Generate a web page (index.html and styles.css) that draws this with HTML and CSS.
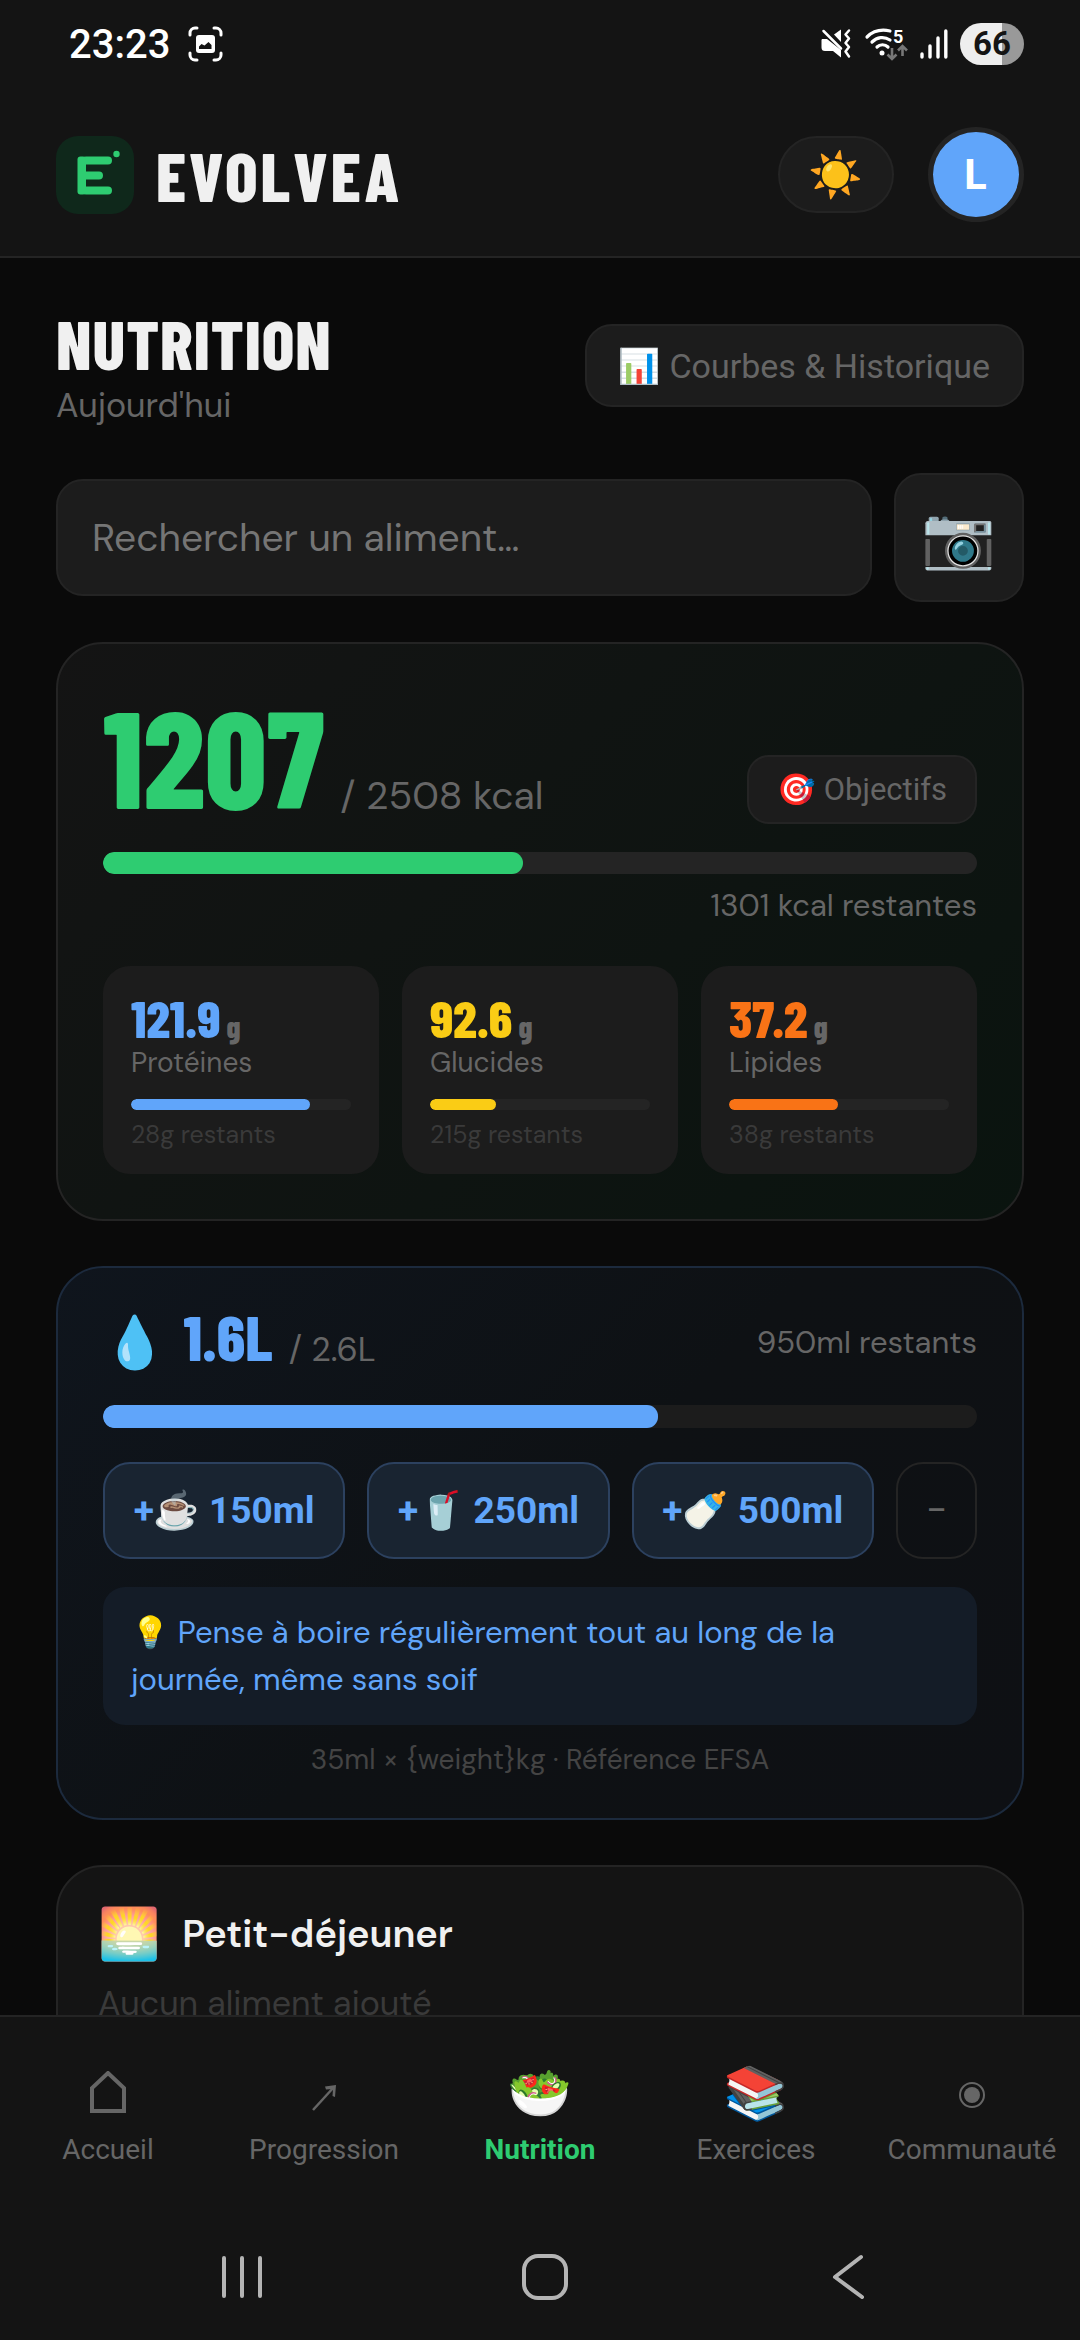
FILE: index.html
```
<!DOCTYPE html>
<html lang="fr">
<head>
  <meta charset="UTF-8">
  <title>Evolvea – Nutrition</title>
  <meta name="viewport" content="width=device-width, initial-scale=1.0">
  <link rel="stylesheet" href="styles.css">
</head>
<body>
  <div class="app">
    <div class="statusbar">
      <div class="status-group">
        <span class="clock">23:23</span>
        <svg class="capture" viewBox="0 0 36 36" width="36" height="36" fill="none" stroke="#fff" stroke-width="3" stroke-linecap="round">
          <path d="M2 9V7a5 5 0 0 1 5-5h2M26 2h2a5 5 0 0 1 5 5v2M33 27v2a5 5 0 0 1-5 5h-2M9 34H7a5 5 0 0 1-5-5v-2"/>
          <rect x="8" y="9" width="19" height="18" rx="3" fill="#fff" stroke="none"/>
          <path d="M11 23v-2.500l2.500-2.500 3 1.500 4-3.500 3 3v4z" fill="#141414" stroke="none"/>
        </svg>
      </div>
      <div class="status-group status-icons">
        <svg viewBox="0 0 32 32" width="32" height="32">
          <path d="M2 11h5l14 11v7.500l-8-6.500H5a3.500 3.500 0 0 1-3.500-3.500V12z" fill="#fff"/>
          <path d="M14 6.500l7-5v12.500z" fill="#fff"/>
          <path d="M3.500 3L21 20.500" stroke="#fff" stroke-width="2.500" stroke-linecap="round"/>
          <path d="M29 2.500l-3.500 4 3.500 4-3.500 4.500 3.500 4-3.500 4.500 3.500 5" fill="none" stroke="#fff" stroke-width="2.500" stroke-linecap="round" stroke-linejoin="round"/>
        </svg>
        <svg class="wifi" viewBox="0 0 44 32" width="44" height="32">
          <g fill="none" stroke="#fff" stroke-width="3.200" stroke-linecap="round">
            <path d="M3 9C9 3 17 1 26 3"/>
            <path d="M8 14c5-5 12-6 18-2"/>
            <path d="M13 19c3-3 8-3 11 0"/>
          </g>
          <circle cx="18" cy="25" r="2.500" fill="#fff"/>
          <text x="29" y="15" class="wifi-gen">5</text>
          <path d="M28 20v11M23.500 26.500l4.500 4.500 4.500-4.500M38.500 28V18M34 22.500l4.500-4.500 4.500 4.500" fill="none" stroke="#777" stroke-width="2.600"/>
        </svg>
        <svg viewBox="0 0 28 30" width="28" height="30" stroke="#fff" stroke-width="3.400" stroke-linecap="round">
          <path d="M2 25v3M10 17v11M18 9v19M25.800 2v26"/>
        </svg>
        <span class="battery">66</span>
      </div>
    </div>

    <header class="topbar">
      <a class="brand" href="#">
        <svg viewBox="0 0 78 78" width="78" height="78">
          <rect width="78" height="78" rx="22" fill="#0f281b"/>
          <path d="M30 24.500H52M26 39.500H43M30 54.500H52" stroke="#2ecc71" stroke-width="8" stroke-linecap="round"/>
          <rect x="21.500" y="20.500" width="8.500" height="38" rx="3" fill="#2ecc71"/>
          <circle cx="60.500" cy="18" r="3.200" fill="#2ecc71"/>
        </svg>
        <span class="brand-name">EVOLVEA</span>
      </a>
      <div class="topbar-actions">
        <button class="theme-btn" type="button" aria-label="Thème">☀️</button>
        <button class="avatar" type="button" aria-label="Profil">L</button>
      </div>
    </header>

    <main>
      <div class="page-head">
        <div>
          <h1>NUTRITION</h1>
          <p class="subtitle">Aujourd'hui</p>
        </div>
        <button class="btn-history" type="button">📊 Courbes &amp; Historique</button>
      </div>

      <div class="search">
        <input type="text" aria-label="Rechercher un aliment" placeholder="Rechercher un aliment…">
        <button class="scan-btn" type="button" aria-label="Scanner">📷</button>
      </div>

      <section class="card card-kcal">
        <div class="kcal-row">
          <div class="kcal"><span class="kcal-value">1207</span><span class="kcal-goal">/ 2508 kcal</span></div>
          <button class="btn-goals" type="button">🎯 Objectifs</button>
        </div>
        <div class="bar"><div class="fill green" style="width: 48.1%"></div></div>
        <p class="kcal-left">1301 kcal restantes</p>
        <div class="macros">
          <div class="macro blue-text">
            <div class="macro-value">121.9<small> g</small></div>
            <div class="macro-name">Protéines</div>
            <div class="bar bar-sm"><div class="fill blue" style="width: 81.3%"></div></div>
            <div class="macro-left">28g restants</div>
          </div>
          <div class="macro yellow-text">
            <div class="macro-value">92.6<small> g</small></div>
            <div class="macro-name">Glucides</div>
            <div class="bar bar-sm"><div class="fill yellow" style="width: 30.1%"></div></div>
            <div class="macro-left">215g restants</div>
          </div>
          <div class="macro orange-text">
            <div class="macro-value">37.2<small> g</small></div>
            <div class="macro-name">Lipides</div>
            <div class="bar bar-sm"><div class="fill orange" style="width: 49.6%"></div></div>
            <div class="macro-left">38g restants</div>
          </div>
        </div>
      </section>

      <section class="card card-water">
        <div class="water-row">
          <span class="drop">💧</span>
          <div class="water"><span class="water-value">1.6L</span><span class="water-goal">/ 2.6L</span></div>
          <span class="water-left">950ml restants</span>
        </div>
        <div class="bar bar-water"><div class="fill blue" style="width: 63.5%"></div></div>
        <div class="water-btns">
          <button class="add-btn" type="button">+☕️ 150ml</button>
          <button class="add-btn" type="button">+🥤 250ml</button>
          <button class="add-btn" type="button">+🍼 500ml</button>
          <button class="minus-btn" type="button">−</button>
        </div>
        <p class="tip">💡 Pense à boire régulièrement tout au long de la journée, même sans soif</p>
        <p class="source">35ml × {weight}kg · Référence EFSA</p>
      </section>

      <section class="card card-meal">
        <h2><span class="meal-icon">🌅</span>Petit-déjeuner</h2>
        <p class="empty">Aucun aliment ajouté</p>
      </section>
    </main>

    <nav class="tabs">
      <a href="#">
        <span class="tab-icon"><svg viewBox="0 0 40 44" width="40" height="44"><path d="M4 40V17L20 2l16 15v23z" fill="none" stroke="#666" stroke-width="4"/></svg></span>
        Accueil
      </a>
      <a href="#">
        <span class="tab-icon"><svg viewBox="0 0 40 44" width="40" height="44"><path d="M9 39L30 16" stroke="#666" stroke-width="2.500"/><path d="M21 15.500l11-1.500-1 12-2.500-1 .5-7-7 .5z" fill="#666"/></svg></span>
        Progression
      </a>
      <a class="active" href="#">
        <span class="tab-icon">🥗</span>
        Nutrition
      </a>
      <a href="#">
        <span class="tab-icon">📚</span>
        Exercices
      </a>
      <a href="#">
        <span class="tab-icon"><svg viewBox="0 0 40 44" width="40" height="44"><circle cx="20" cy="24" r="12" fill="none" stroke="#666" stroke-width="2"/><circle cx="20" cy="24" r="8" fill="#666"/></svg></span>
        Communauté
      </a>
    </nav>

    <div class="sysnav">
      <svg viewBox="0 0 48 48" width="48" height="48" fill="none" stroke="#b4b4b4" stroke-width="4" stroke-linecap="round"><path d="M6 5v38M24 5v38M42 5v38"/></svg>
      <svg viewBox="0 0 48 48" width="48" height="48" fill="none" stroke="#b4b4b4" stroke-width="4"><rect x="3" y="3" width="42" height="42" rx="14"/></svg>
      <svg viewBox="0 0 48 48" width="48" height="48" fill="none" stroke="#b4b4b4" stroke-width="4" stroke-linecap="round" stroke-linejoin="round"><path d="M37 4L11 24l27 20"/></svg>
    </div>
  </div>
</body>
</html>
```
FILE: styles.css
```
* {
  box-sizing: border-box;
  margin: 0;
  padding: 0;
}
body {
  background-color: #0a0a0a;
  color: #f0f0f0;
  font-family: "DM Sans", Inter, "Noto Color Emoji", sans-serif;
  font-size: 39px;
}
button, input {
  font: inherit;
  color: inherit;
}
button {
  font-family: Roboto, "Noto Color Emoji", sans-serif;
  background-color: #1c1c1c;
  border: 2px solid #242424;
  color: #666;
  white-space: nowrap;
}
a {
  color: inherit;
  text-decoration: none;
}
.app {
  display: flex;
  flex-direction: column;
  height: 100vh;
}

/* status bar */
.statusbar {
  display: flex;
  justify-content: space-between;
  align-items: center;
  height: 88px;
  padding: 0 56px 0 69px;
  background-color: #141414;
  color: #fff;
  font-family: Roboto, sans-serif;
}
.status-group {
  display: flex;
  align-items: center;
  gap: 18px;
}
.status-icons {
  gap: 12px;
}
.clock {
  font-size: 40px;
  font-weight: 500;
}
.wifi {
  overflow: visible;
}
.wifi-gen {
  font-size: 18px;
  font-weight: 700;
  fill: #fff;
}
.battery {
  width: 64px;
  line-height: 42px;
  border-radius: 21px;
  background: linear-gradient(to right, #eee 65%, #999 65%);
  color: #141414;
  font-size: 33px;
  font-weight: 700;
  text-align: center;
}

/* header */
.topbar {
  display: flex;
  justify-content: space-between;
  align-items: center;
  padding: 39px 56px 34px;
  background-color: #141414;
  border-bottom: 2px solid #242424;
}
.brand {
  display: flex;
  align-items: center;
  gap: 22px;
}
.brand-name, h1, .kcal-value, .macro-value, .water-value {
  font-family: "Barlow Condensed", "Roboto Condensed", sans-serif;
  font-weight: 800;
}
.brand-name {
  font-size: 68px;
  line-height: 76px;
  letter-spacing: 3px;
}
.topbar-actions {
  display: flex;
  align-items: center;
  gap: 34px;
}
.theme-btn {
  width: 116px;
  height: 77px;
  border-radius: 39px;
  font-size: 44px;
}
.avatar {
  width: 96px;
  height: 95px;
  border: 5px solid #242424;
  border-radius: 50%;
  background-color: #60a5fa;
  color: #fff;
  font-family: "DM Sans", Inter, sans-serif;
  font-size: 42px;
  font-weight: 900;
}

/* content */
main {
  flex: 1;
  min-height: 0;
  overflow: hidden;
  padding: 45px 56px 0;
}
.page-head {
  display: flex;
  justify-content: space-between;
  align-items: center;
}
h1 {
  font-size: 68px;
  line-height: 81px;
  letter-spacing: 1px;
}
.subtitle {
  font-size: 34px;
  line-height: 44px;
  color: #666;
}
.btn-history {
  height: 83px;
  padding: 0 32px;
  border-radius: 27px;
  font-size: 34px;
}
.search {
  display: flex;
  align-items: center;
  gap: 22px;
  margin: 45px 0 40px;
}
.search input {
  flex: 1;
  min-width: 0;
  height: 117px;
  padding: 0 34px;
  background-color: #1c1c1c;
  border: 2px solid #242424;
  border-radius: 27px;
}
.search input::placeholder {
  color: #757575;
}
.scan-btn {
  width: 130px;
  height: 129px;
  border-radius: 27px;
  font-size: 60px;
}
.card {
  margin-bottom: 45px;
  padding: 45px;
  border: 2px solid #242424;
  border-radius: 47px;
  background-color: #141414;
}
.bar {
  height: 22px;
  border-radius: 11px;
  background-color: #242424;
  overflow: hidden;
}
.bar-sm {
  height: 11px;
}
.fill {
  height: 100%;
  border-radius: 11px;
}
.green { background-color: #2ecc71; }
.blue { background-color: #60a5fa; }
.yellow { background-color: #facc15; }
.orange { background-color: #f97316; }
.blue-text { color: #60a5fa; }
.yellow-text { color: #facc15; }
.orange-text { color: #f97316; }

/* calories */
.card-kcal {
  padding-top: 44px;
  background: linear-gradient(135deg, #141414, #0a140f);
}
.kcal-row {
  display: flex;
  justify-content: space-between;
  align-items: flex-end;
  margin-bottom: 28px;
}
.kcal {
  display: flex;
  align-items: baseline;
  gap: 16px;
  padding-bottom: 2px;
}
.kcal-value {
  font-size: 136px;
  line-height: 134px;
  color: #2ecc71;
}
.kcal-goal {
  color: #666;
}
.btn-goals {
  height: 69px;
  padding: 0 28px;
  border-radius: 22px;
  font-size: 31px;
}
.kcal-left {
  margin: 12px 0 40px;
  font-size: 31px;
  line-height: 40px;
  text-align: right;
  color: #666;
}
.macros {
  display: grid;
  grid-template-columns: repeat(3, 1fr);
  gap: 23px;
}
.macro {
  padding: 24px 28px 22px;
  border-radius: 27px;
  background-color: #1c1c1c;
}
.macro-value {
  font-size: 52px;
  line-height: 54px;
}
.macro-value small {
  font-size: 31px;
  line-height: 31px;
  color: #666;
}
.macro-name {
  margin-bottom: 17px;
  font-size: 28px;
  line-height: 38px;
  color: #666;
}
.macro-left {
  margin-top: 8px;
  font-size: 25px;
  line-height: 34px;
  color: #3a3a3a;
}

/* hydration */
.card-water {
  padding: 37px 45px 38px;
  border-color: #1c2a3d;
  background: linear-gradient(135deg, #0f151d, #0e1114 50%, #0e1014);
}
.water-row {
  display: flex;
  height: 75px;
  margin-bottom: 25px;
}
.drop {
  font-size: 51px;
  line-height: 75px;
}
.water {
  line-height: 62px;
  margin-left: 17px;
}
.water-value {
  font-size: 63px;
  color: #60a5fa;
}
.water-goal {
  margin-left: 16px;
  font-size: 34px;
  color: #666;
}
.water-left {
  margin-left: auto;
  font-size: 31px;
  line-height: 75px;
  color: #666;
}
.bar-water {
  height: 23px;
  border-radius: 12px;
  background-color: #1c1c1c;
}
.water-btns {
  display: flex;
  gap: 22px;
  margin: 34px 0 28px;
}
.water-btns button {
  height: 97px;
  border-radius: 27px;
}
.add-btn {
  flex: 1;
  border-color: #2c415f;
  background-color: #192431;
  color: #60a5fa;
  font-size: 37px;
  font-weight: 700;
}
.minus-btn {
  width: 81px;
  background-color: transparent;
  font-size: 37px;
}
.tip {
  padding: 22px 28px;
  border-radius: 22px;
  background-color: #141c27;
  color: #60a5fa;
  font-size: 31px;
  line-height: 47px;
}
.source {
  margin-top: 15px;
  font-size: 28px;
  line-height: 40px;
  text-align: center;
  color: #444;
}

/* meals */
.card-meal {
  padding: 37px 40px;
}
h2 {
  display: flex;
  align-items: center;
  gap: 22px;
  font-size: 38px;
  font-weight: 600;
  line-height: 60px;
}
.meal-icon {
  font-size: 50px;
}
.empty {
  margin-top: 18px;
  font-size: 34px;
  line-height: 44px;
  color: #3a3a3a;
}

/* bottom navigation */
.tabs {
  display: flex;
  padding: 43px 0 48px;
  border-top: 2px solid #242424;
  background-color: #141414;
  color: #666;
  font-family: Roboto, "Noto Color Emoji", sans-serif;
  font-size: 28px;
  line-height: 33px;
}
.tabs a {
  display: flex;
  flex: 1 0 0;
  flex-direction: column;
  align-items: center;
  gap: 7px;
}
.tabs .active {
  color: #2ecc71;
  font-weight: 700;
}
.tab-icon {
  display: flex;
  align-items: center;
  height: 66px;
  font-size: 52px;
}
.sysnav {
  display: flex;
  justify-content: space-between;
  align-items: center;
  height: 126px;
  padding: 0 208px 0 218px;
  background-color: #141414;
}
```
